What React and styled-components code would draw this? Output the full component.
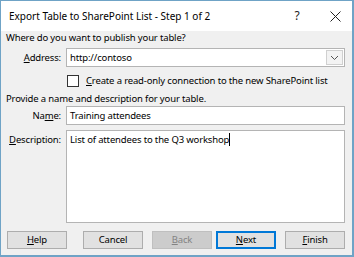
import styled, { createGlobalStyle } from 'styled-components';

const Global = createGlobalStyle`
  html, body { margin: 0; padding: 0; background: #f0f0f0; }
  body {
    font-family: "Noto Sans", "Open Sans", sans-serif;
    font-size: 9.5px;
    letter-spacing: -0.15px;
    line-height: 14px;
    color: #000;
  }
`;

const Frame = styled.div`
  width: 354px;
  height: 257px;
  box-sizing: border-box;
  border: 1px solid #6fa3c6;
  border-right-width: 2px;
  border-bottom-width: 2px;
  background: #f0f0f0;
  display: flex;
  flex-direction: column;
  overflow: hidden;
`;

const TitleBar = styled.div`
  height: 30px;
  background: #fff;
  display: flex;
  align-items: center;
  padding-left: 8px;
  flex-shrink: 0;
`;

const Title = styled.div`
  flex: 1;
  font-size: 10px;
  letter-spacing: 0;
`;

const TitleBtn = styled.div`
  width: ${p => p.w}px;
  margin-right: ${p => p.mr || 0}px;
  display: flex;
  justify-content: center;
  font-size: 12px;
  color: #222;
`;

const Body = styled.div`
  flex: 1;
  display: flex;
  flex-direction: column;
  padding: 0 7px 0 5px;
`;

const Heading = styled.div`
  margin-top: ${p => p.mt}px;
`;

const Row = styled.div`
  display: grid;
  grid-template-columns: 55px 1fr;
  column-gap: 5px;
  align-items: ${p => p.top ? 'start' : 'center'};
  margin-top: ${p => p.mt}px;
`;

const Label = styled.label`
  text-align: right;
  padding-top: ${p => p.top ? 3 : 0}px;
  white-space: nowrap;
`;

const U = styled.span`
  text-decoration: underline;
`;

const Field = styled.div`
  height: ${p => p.h}px;
  box-sizing: border-box;
  background: #fff;
  border: 1px solid #b4b4b4;
  display: flex;
  align-items: ${p => p.multi ? 'flex-start' : 'center'};
  padding: ${p => p.multi ? '2px 3px' : '0 0 0 3px'};
`;

const FieldText = styled.span`
  flex: 1;
`;

const Caret = styled.span`
  display: inline-block;
  width: 1px;
  height: 13px;
  background: #000;
  vertical-align: top;
`;

const DropBtn = styled.div`
  width: 17px;
  align-self: stretch;
  margin: 1px;
  box-sizing: border-box;
  border: 1px solid #d0d0d0;
  background: #f3f3f3;
  display: flex;
  align-items: center;
  justify-content: center;
`;

const CheckRow = styled.div`
  display: flex;
  align-items: center;
  gap: 7px;
  margin: 7px 0 0 61px;
  white-space: nowrap;
`;

const Box = styled.div`
  width: 12px;
  height: 12px;
  box-sizing: border-box;
  border: 1px solid #333;
  background: #fff;
`;

const Buttons = styled.div`
  display: flex;
  margin-top: auto;
  margin-bottom: 6px;
  padding-left: 1px;
`;

const Button = styled.div`
  width: 60px;
  height: 18px;
  box-sizing: border-box;
  margin-left: ${p => p.ml || 0}px;
  display: flex;
  align-items: center;
  justify-content: center;
  background: ${p => p.disabled ? '#cccccc' : '#e1e1e1'};
  color: ${p => p.disabled ? '#838383' : '#000'};
  border: ${p => p.primary ? '2px solid #0078d7' : `1px solid ${p.disabled ? '#bfbfbf' : '#adadad'}`};
`;

export default function App() {
  return (
    <>
      <Global />
      <Frame>
        <TitleBar>
          <Title>Export Table to SharePoint List - Step 1 of 2</Title>
          <TitleBtn w={26} mr={8}>?</TitleBtn>
          <TitleBtn w={34}>
            <svg width="11" height="11" viewBox="0 0 11 11">
              <path d="M0.5 0.5 L10.5 10.5 M10.5 0.5 L0.5 10.5" stroke="#222" strokeWidth="1" fill="none" />
            </svg>
          </TitleBtn>
        </TitleBar>
        <Body>
          <Heading mt={0}>Where do you want to publish your table?</Heading>
          <Row mt={3}>
            <Label><U>A</U>ddress:</Label>
            <Field h={19}>
              <FieldText>http://contoso</FieldText>
              <DropBtn>
                <svg width="9" height="6" viewBox="0 0 9 6">
                  <path d="M1 1 L4.5 4.5 L8 1" stroke="#555" strokeWidth="1" fill="none" />
                </svg>
              </DropBtn>
            </Field>
          </Row>
          <CheckRow>
            <Box />
            <span><U>C</U>reate a read-only connection to the new SharePoint list</span>
          </CheckRow>
          <Heading mt={4}>Provide a name and description for your table.</Heading>
          <Row mt={0}>
            <Label>Na<U>m</U>e:</Label>
            <Field h={19}>
              <FieldText>Training attendees</FieldText>
            </Field>
          </Row>
          <Row mt={5} top>
            <Label top><U>D</U>escription:</Label>
            <Field h={93} multi>
              <FieldText>List of attendees to the Q3 workshop<Caret /></FieldText>
            </Field>
          </Row>
          <Buttons>
            <Button><U>H</U>elp</Button>
            <Button ml={16}>Cancel</Button>
            <Button ml={9} disabled><U>B</U>ack</Button>
            <Button ml={4} primary><U>N</U>ext</Button>
            <Button ml={9}><U>F</U>inish</Button>
          </Buttons>
        </Body>
      </Frame>
    </>
  );
}
